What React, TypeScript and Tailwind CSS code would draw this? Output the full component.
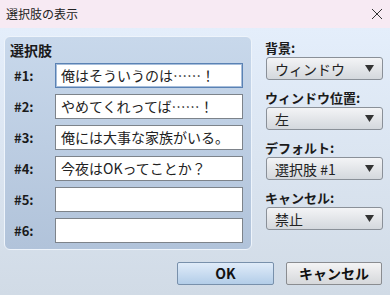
import React from "react";

const font = { fontFamily: '"Noto Sans CJK JP", "Noto Sans", sans-serif' };

const choices = [
  "俺はそういうのは……！",
  "やめてくれってば……！",
  "俺には大事な家族がいる。",
  "今夜はOKってことか？",
  "",
  "",
];

const groups = [
  { label: "背景:", value: "ウィンドウ" },
  { label: "ウィンドウ位置:", value: "左" },
  { label: "デフォルト:", value: "選択肢 #1" },
  { label: "キャンセル:", value: "禁止" },
];

export default function App() {
  return (
    <div className="w-[390px] h-[295px] flex flex-col overflow-hidden text-[#1a1a1a]" style={font}>
      <div className="h-[28px] flex items-center justify-between bg-[#f7eaf3] pl-[6px] pr-[6px]">
        <span className="text-[12px] leading-none text-[#222]">選択肢の表示</span>
        <svg width="12" height="12" viewBox="0 0 12 12" className="mr-[1px]">
          <path d="M1 1 L11 11 M11 1 L1 11" stroke="#333" strokeWidth="1" />
        </svg>
      </div>
      <div className="flex-1 flex flex-col bg-gradient-to-b from-[#e4eefb] to-[#d1dbe6]">
        <div className="flex pt-[8px] pl-[4px]">
          <div className="w-[248px] rounded-[6px] border border-[#eef4fb] bg-gradient-to-b from-[#c8d8eb] to-[#b1c3da] pt-[3px] pb-[6px] pl-[9px] pr-[8px] flex flex-col">
            <div className="h-[20px] leading-[20px] text-[14px] font-bold mb-[3px] -ml-[4px]">選択肢</div>
            <div className="flex flex-col gap-[6px]">
              {choices.map((c, i) => (
                <div key={i} className="flex items-center h-[25px]">
                  <span className="w-[41px] text-[13px] font-bold">#{i + 1}:</span>
                  <div
                    className={
                      "flex-1 h-[25px] bg-white flex items-center pl-[5px] text-[14px] text-[#222] whitespace-nowrap overflow-hidden " +
                      (i === 0
                        ? "border border-[#5a82b4] shadow-[inset_0_0_0_1px_#a7bedb]"
                        : "border border-[#7d838a]")
                    }
                  >
                    {c}
                  </div>
                </div>
              ))}
            </div>
          </div>
          <div className="ml-[13px] w-[118px] flex flex-col gap-[8px] pt-[2px]">
            {groups.map((g) => (
              <div key={g.label} className="flex flex-col">
                <div className="h-[19px] leading-[19px] text-[13px] font-bold">{g.label}</div>
                <div className="ml-[1px] w-[117px] h-[23px] rounded-[3px] border border-[#8a9098] bg-gradient-to-b from-[#f3f4f6] to-[#d4d8dd] flex items-center justify-between pl-[8px] pr-[8px]">
                  <span className="text-[14px] leading-none text-[#222]">{g.value}</span>
                  <svg width="9" height="7" viewBox="0 0 9 7">
                    <path d="M0 0 L9 0 L4.5 7 Z" fill="#333" />
                  </svg>
                </div>
              </div>
            ))}
          </div>
        </div>
        <div className="flex justify-end gap-[12px] pr-[8px] mt-[12px]">
          <button className="w-[97px] h-[23px] rounded-[2px] border border-[#7890ab] bg-gradient-to-b from-[#e0ecf9] to-[#b3cde8] text-[14px] font-bold text-[#111] flex items-center justify-center">
            OK
          </button>
          <button className="w-[96px] h-[23px] rounded-[2px] border border-[#8a8c90] bg-gradient-to-b from-[#f4f4f5] to-[#d6d8db] text-[14px] font-bold text-[#111] flex items-center justify-center">
            キャンセル
          </button>
        </div>
      </div>
    </div>
  );
}
